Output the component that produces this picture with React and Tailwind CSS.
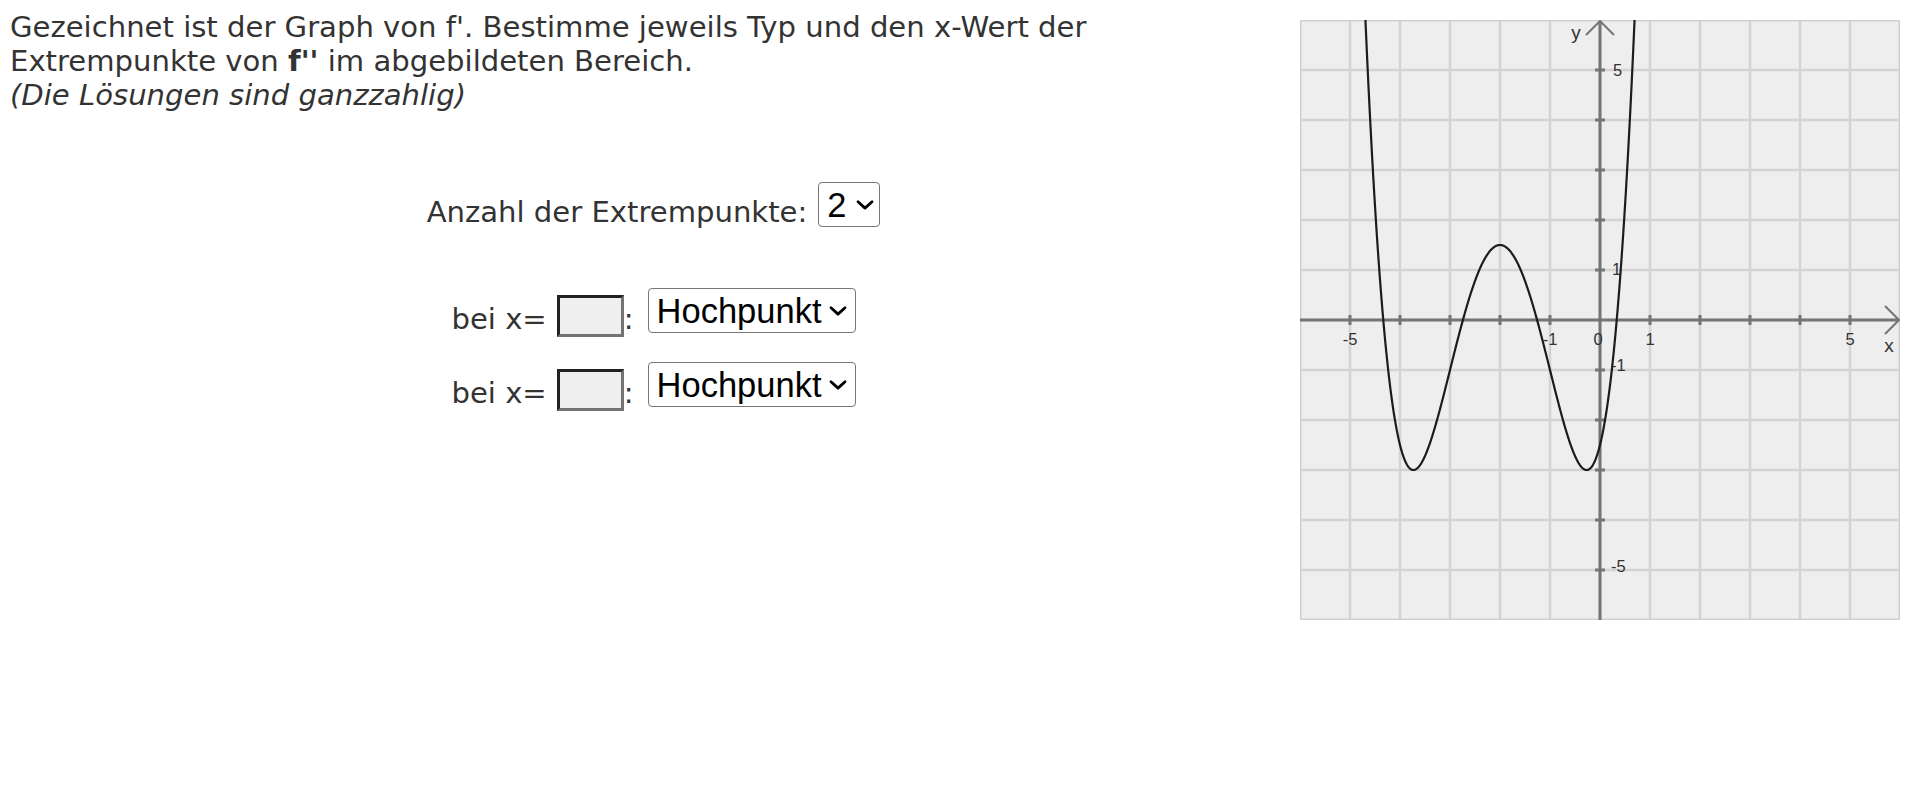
import React from "react";

function Chevron({ className }) {
  return (
    <svg
      className={className}
      width="18"
      height="11"
      viewBox="0 0 18 11"
      fill="none"
      aria-hidden="true"
    >
      <path
        d="M2 2.2 L9 8.6 L16 2.2"
        stroke="#000"
        strokeWidth="2.8"
        strokeLinecap="round"
        strokeLinejoin="round"
      />
    </svg>
  );
}

function Select({ options, value, boxClass, chevronClass }) {
  return (
    <div className="relative inline-flex shrink-0">
      <select
        defaultValue={value}
        className={
          "appearance-none h-[45px] rounded-[4px] border border-[#767676] bg-white pl-[8px] text-black text-[34.5px] leading-[normal] font-['Liberation_Sans',Arial,sans-serif] outline-none " +
          boxClass
        }
      >
        {options.map((o) => (
          <option key={o} value={o}>
            {o}
          </option>
        ))}
      </select>
      <Chevron
        className={
          "pointer-events-none absolute top-1/2 -translate-y-1/2 " +
          chevronClass
        }
      />
    </div>
  );
}

function XInput() {
  return (
    <input
      type="text"
      defaultValue=""
      className="h-[42px] w-[67px] shrink-0 border-[3px] border-t-[#222222] border-l-[#222222] border-r-[#737373] border-b-[#737373] bg-[#efefef] outline-none"
    />
  );
}

function Graph() {
  const f = (x) => 0.5 * Math.pow((x + 2) * (x + 2) - 3, 2) - 3;
  const pts = [];
  for (let i = 0; i <= 800; i++) {
    const x = -4.74 + (i * 5.48) / 800;
    pts.push(
      (300 + 50 * x).toFixed(2) + "," + (300 - 50 * f(x)).toFixed(2)
    );
  }
  const grid = [1, 2, 3, 4, 5, 6, 7, 8, 9, 10, 11].map((i) => i * 50);
  const ticks = [-5, -4, -3, -2, -1, 1, 2, 3, 4, 5];
  const axis = "#757575";
  const lbl = {
    fontFamily: "'Liberation Sans', Arial, sans-serif",
    fontSize: 16.5,
    fill: "#333",
  };
  return (
    <svg
      width="600"
      height="600"
      viewBox="0 0 600 600"
      className="block"
      aria-label="Graph von f'"
    >
      <defs>
        <clipPath id="plotclip">
          <rect x="0" y="0" width="600" height="600" />
        </clipPath>
      </defs>
      <rect x="0" y="0" width="600" height="600" fill="#eeeeee" />
      {grid.map((g) => (
        <line
          key={"v" + g}
          x1={g}
          y1={0}
          x2={g}
          y2={600}
          stroke="#d3d3d3"
          strokeWidth="2.5"
        />
      ))}
      {grid.map((g) => (
        <line
          key={"h" + g}
          x1={0}
          y1={g}
          x2={600}
          y2={g}
          stroke="#d3d3d3"
          strokeWidth="2.5"
        />
      ))}
      <rect
        x="0.75"
        y="0.75"
        width="598.5"
        height="598.5"
        fill="none"
        stroke="#d0d0d0"
        strokeWidth="1.5"
      />
      {/* axes */}
      <line x1="0" y1="300" x2="599" y2="300" stroke={axis} strokeWidth="3" />
      <line x1="300" y1="1" x2="300" y2="600" stroke={axis} strokeWidth="3" />
      <polyline
        points="585,286 599,300 585,314"
        fill="none"
        stroke={axis}
        strokeWidth="2"
      />
      <polyline
        points="286,15 300,1 314,15"
        fill="none"
        stroke={axis}
        strokeWidth="2"
      />
      {ticks.map((t) => (
        <line
          key={"tx" + t}
          x1={300 + 50 * t}
          y1={295}
          x2={300 + 50 * t}
          y2={305}
          stroke={axis}
          strokeWidth="3"
        />
      ))}
      {ticks.map((t) => (
        <line
          key={"ty" + t}
          x1={295}
          y1={300 - 50 * t}
          x2={305}
          y2={300 - 50 * t}
          stroke={axis}
          strokeWidth="3"
        />
      ))}
      {/* x labels */}
      <text x="50" y="325" textAnchor="middle" style={lbl}>-5</text>
      <text x="250" y="325" textAnchor="middle" style={lbl}>-1</text>
      <text x="298" y="325" textAnchor="middle" style={lbl}>0</text>
      <text x="350" y="325" textAnchor="middle" style={lbl}>1</text>
      <text x="550" y="325" textAnchor="middle" style={lbl}>5</text>
      <text x="589" y="332" textAnchor="middle" style={{ ...lbl, fontSize: 19 }}>x</text>
      {/* y labels */}
      <text x="276" y="19" textAnchor="middle" style={{ ...lbl, fontSize: 19 }}>y</text>
      <text x="313" y="56" style={lbl}>5</text>
      <text x="312" y="255" style={lbl}>1</text>
      <text x="311" y="351" style={lbl}>-1</text>
      <text x="311" y="552" style={lbl}>-5</text>
      <polyline
        points={pts.join(" ")}
        fill="none"
        stroke="#1c1c1c"
        strokeWidth="2.2"
        strokeLinejoin="round"
        clipPath="url(#plotclip)"
      />
    </svg>
  );
}

export default function App() {
  return (
    <div className="min-h-screen bg-white text-[#333333] font-['DejaVu_Sans',Verdana,sans-serif]">
      <div className="flex pl-[10px] pt-[10px]">
        <div className="w-[1287px] shrink-0">
          <p className="text-[29.1px] leading-[34px]">
            Gezeichnet ist der Graph von f'. Bestimme jeweils Typ und den
            x-Wert der
            <br />
            Extrempunkte von <b className="font-bold">f''</b> im abgebildeten
            Bereich.
            <br />
            <i>(Die Lösungen sind ganzzahlig)</i>
          </p>

          <div className="mt-[70px] flex items-start justify-center">
            <span className="mt-[13px] text-[29.1px] leading-[34px]">
              Anzahl der Extrempunkte:
            </span>
            <div className="ml-[11px]">
              <Select
                options={["0", "1", "2", "3", "4"]}
                value="2"
                boxClass="w-[62px]"
                chevronClass="right-[6px]"
              />
            </div>
          </div>

          <div className="mt-[59px] flex items-start justify-center">
            <span className="mt-[14px] text-[29.1px] leading-[34px]">bei x=</span>
            <div className="ml-[10px] mt-[7px]">
              <XInput />
            </div>
            <span className="mt-[14px] text-[29.1px] leading-[34px]">:</span>
            <div className="ml-[14px]">
              <Select
                options={["Hochpunkt", "Tiefpunkt"]}
                value="Hochpunkt"
                boxClass="w-[208px]"
                chevronClass="right-[9px]"
              />
            </div>
          </div>

          <div className="mt-[25px] flex items-start justify-center">
            <span className="mt-[14px] text-[29.1px] leading-[34px]">bei x=</span>
            <div className="ml-[10px] mt-[7px]">
              <XInput />
            </div>
            <span className="mt-[14px] text-[29.1px] leading-[34px]">:</span>
            <div className="ml-[14px]">
              <Select
                options={["Hochpunkt", "Tiefpunkt"]}
                value="Hochpunkt"
                boxClass="w-[208px]"
                chevronClass="right-[9px]"
              />
            </div>
          </div>
        </div>

        <div className="ml-[3px] mt-[10px] shrink-0">
          <Graph />
        </div>
      </div>
    </div>
  );
}
